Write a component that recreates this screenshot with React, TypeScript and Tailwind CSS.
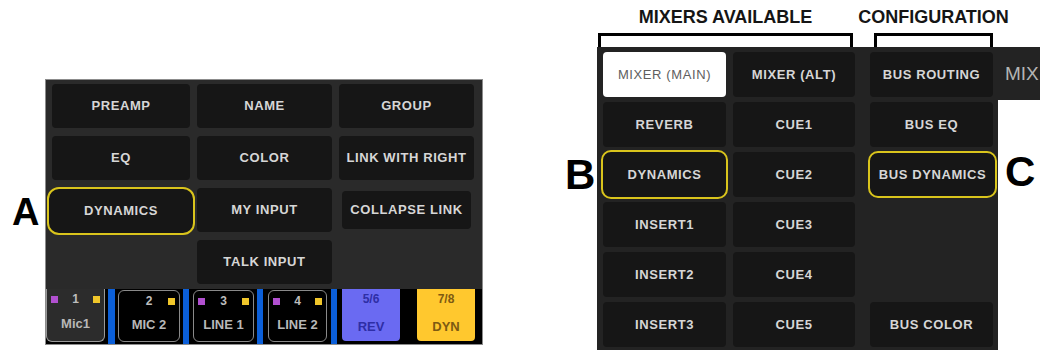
import type { ReactNode } from "react";
import { twMerge } from "tailwind-merge";

const btn =
  "flex items-center justify-center whitespace-nowrap rounded-[4px] bg-[#161616] text-[13px] font-bold tracking-[0.6px] text-[#d6d6d6]";

function Btn({ label, className = "" }: { label: string; className?: string }) {
  return <div className={twMerge(btn, className)}>{label}</div>;
}

function Dot({ color }: { color: string }) {
  return <span className={`h-[7px] w-[7px] ${color}`} />;
}

function Channel({
  num,
  label,
  purple = true,
  selected = false,
  width,
}: {
  num: string;
  label: string;
  purple?: boolean;
  selected?: boolean;
  width: string;
}) {
  return (
    <div
      className={`flex shrink-0 flex-col ${width} ${
        selected
          ? "rounded-b-[6px] border-x border-b border-[#9a9a9a] bg-[#2c2c2c]"
          : "mt-[1px] rounded-[6px] border border-[#8a8a8a] bg-black"
      } mb-[2px]`}
    >
      <div className="flex h-[18px] items-center justify-between px-[4px] pt-[2px]">
        {purple ? <Dot color="bg-[#b150d0]" /> : <span className="w-[7px]" />}
        <span className="text-[12px] font-bold leading-none text-[#bdbdbd]">{num}</span>
        <Dot color="bg-[#f0c62a]" />
      </div>
      <div className="flex flex-1 items-center justify-center pb-[2px] text-[13px] font-bold leading-none text-[#b8b8b8]">
        {label}
      </div>
    </div>
  );
}

function Bus({ top, bottom, className }: { top: string; bottom: string; className: string }) {
  return (
    <div className={`mb-[3px] flex w-[58px] shrink-0 flex-col items-center rounded-b-[4px] ${className}`}>
      <span className="pt-[4px] text-[12px] font-bold leading-none">{top}</span>
      <span className="mt-auto pb-[8px] text-[13px] font-bold leading-none">{bottom}</span>
    </div>
  );
}

function Blue({ className = "" }: { className?: string }) {
  return <div className={`w-[6px] shrink-0 bg-[#0b5fd9] ${className}`} />;
}

function Bracket({ title, width, className = "" }: { title: string; width: string; className?: string }) {
  return (
    <div className={`flex flex-col items-center ${width} ${className}`}>
      <p className="whitespace-nowrap pt-[8px] text-[18px] font-bold leading-none text-[#151515]">{title}</p>
      <div className="mt-auto h-[14px] w-full border-x-[3px] border-t-[3px] border-black" />
    </div>
  );
}

function Column({ children, className = "" }: { children: ReactNode; className?: string }) {
  return (
    <div className={twMerge("grid w-[123px] shrink-0 grid-rows-[45px_45px_45px_45px_45px_45px] gap-y-[5px]", className)}>
      {children}
    </div>
  );
}

export default function App() {
  return (
    <div className="flex h-[350px] w-[1040px] overflow-hidden bg-white font-['Liberation_Sans',Arial,sans-serif]">
      {/* channel settings popup */}
      <div className="flex w-[560px] pt-[79px]">
        <div className="w-[45px] pl-[12px] pt-[114px] text-[38px] font-bold leading-none text-black">A</div>
        <div className="flex h-[266px] w-[438px] flex-col border border-[#8c8c8c] bg-[#2a2a2a]">
          <div className="grid grid-cols-[138px_135px_135px] grid-rows-[44px_44px_44px_44px] gap-x-[7px] gap-y-[8px] pb-[5px] pl-[6px] pt-[4px]">
            <Btn label="PREAMP" />
            <Btn label="NAME" />
            <Btn label="GROUP" />
            <Btn label="EQ" />
            <Btn label="COLOR" />
            <Btn label="LINK WITH RIGHT" />
            <Btn label="DYNAMICS" className="-mx-[5px] -mb-[3px] -mt-[1px] rounded-[12px] border-2 border-[#d9c41c]" />
            <Btn label="MY INPUT" />
            <Btn label="COLLAPSE LINK" className="mx-[3px] my-[3px]" />
            <div />
            <Btn label="TALK INPUT" />
            <div />
          </div>
          <div className="flex h-[55px] bg-black">
            <Channel num="1" label="Mic1" selected width="w-[59px]" />
            <Blue className="ml-[3px] w-[7px]" />
            <Channel num="2" label="MIC 2" purple={false} width="ml-[3px] w-[62px]" />
            <Blue className="ml-[3px]" />
            <Channel num="3" label="LINE 1" width="ml-[4px] w-[61px]" />
            <Blue className="ml-[3px]" />
            <Channel num="4" label="LINE 2" width="ml-[5px] w-[59px]" />
            <Blue className="ml-[4px]" />
            <Bus top="5/6" bottom="REV" className="ml-[5px] bg-[#6a6af2] text-[#2e2ea6]" />
            <Bus top="7/8" bottom="DYN" className="ml-[17px] bg-[#ffc82e] text-[#7d5a12]" />
          </div>
        </div>
      </div>

      {/* mixer selection screen */}
      <div className="flex w-[480px] flex-col">
        <div className="flex h-[47px] shrink-0 pl-[38px]">
          <Bracket title="MIXERS AVAILABLE" width="w-[255px]" />
          <Bracket title="CONFIGURATION" width="w-[119px]" className="ml-[21px]" />
        </div>
        <div className="flex flex-1">
          <div className="w-[37px] pl-[5px] pt-[107px] text-[42px] font-bold leading-none text-black">B</div>
          <div className="flex w-[401px] bg-[#232323] pl-[6px] pt-[5px]">
            <Column>
              <Btn label="MIXER (MAIN)" className="bg-white font-normal text-[#5e5e5e]" />
              <Btn label="REVERB" />
              <Btn label="DYNAMICS" className="-mx-[2px] -my-[2px] rounded-[10px] border-2 border-[#d9c41c]" />
              <Btn label="INSERT1" />
              <Btn label="INSERT2" />
              <Btn label="INSERT3" />
            </Column>
            <Column className="ml-[7px] w-[122px]">
              <Btn label="MIXER (ALT)" />
              <Btn label="CUE1" />
              <Btn label="CUE2" />
              <Btn label="CUE3" />
              <Btn label="CUE4" />
              <Btn label="CUE5" />
            </Column>
            <Column className="ml-[15px]">
              <Btn label="BUS ROUTING" />
              <Btn label="BUS EQ" />
              <Btn label="BUS DYNAMICS" className="-ml-[2px] -mr-[4px] -my-[1px] rounded-[10px] border-2 border-[#d9c41c]" />
              <div />
              <div />
              <Btn label="BUS COLOR" />
            </Column>
          </div>
          <div className="flex w-[42px] flex-col">
            <div className="flex h-[53px] items-center bg-[#232323] pl-[7px] text-[19px] leading-none text-[#b4b4b4]">MIX</div>
            <div className="pl-[7px] pt-[51px] text-[42px] font-bold leading-none text-black">C</div>
          </div>
        </div>
      </div>
    </div>
  );
}
